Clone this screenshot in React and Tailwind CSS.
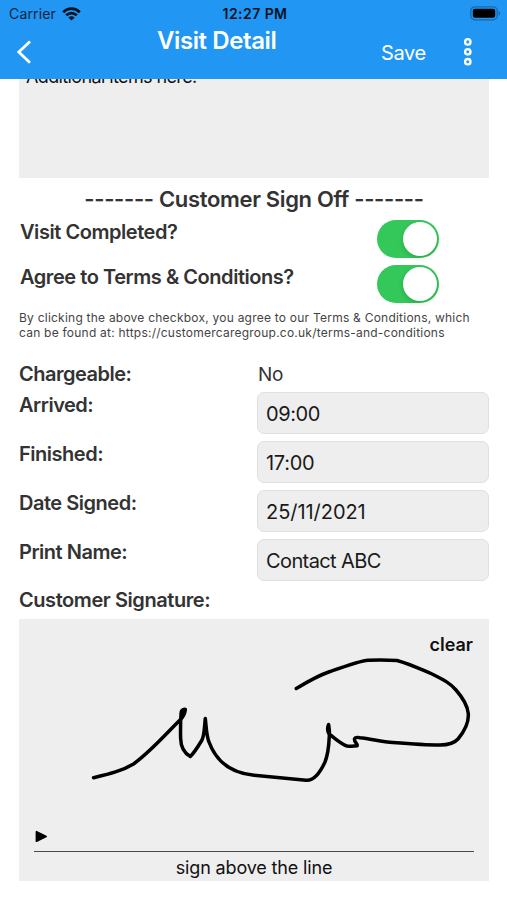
import { useState } from 'react';

const FIELDS = [
  { label: 'Arrived:', name: 'arrived', value: '09:00', tracking: 'tracking-[-0.4px]' },
  { label: 'Finished:', name: 'finished', value: '17:00', tracking: 'tracking-[-0.3px]' },
  { label: 'Date Signed:', name: 'dateSigned', value: '25/11/2021', tracking: 'tracking-[-0.05px]' },
  { label: 'Print Name:', name: 'printName', value: 'Contact ABC', tracking: 'tracking-[-0.6px]' },
];

const StatusBar = () => (
  <div className="grid h-[27px] grid-cols-3 items-center pl-[9px] pr-[6px] text-[14px] leading-none text-[#0b2440]">
    <div className="flex items-center gap-[6px]">
      <span className="tracking-[0.15px]">Carrier</span>
      <svg width="19" height="14" viewBox="0 0 19 14" fill="none" stroke="#06121f" strokeWidth="2.7">
        <path d="M1.2 5.2C6 .3 13 .3 17.8 5.2" />
        <path d="M4.2 8.3c3-3 7.6-3 10.6 0" />
        <path d="M9.5 13.6 6.4 10.5c1.7-1.6 4.5-1.6 6.2 0Z" fill="#06121f" stroke="none" />
      </svg>
    </div>
    <span className="text-center font-semibold tracking-[0.45px] text-[#06121f]">12:27 PM</span>
    <svg className="justify-self-end" width="31" height="15" viewBox="0 0 31 15">
      <rect x=".8" y=".8" width="26.4" height="13" rx="4" fill="none" stroke="#1769ad" strokeWidth="1.3" />
      <rect x="2.8" y="2.8" width="22.4" height="9" rx="2" fill="#000" />
      <path d="M28.6 5v4.6c2-.8 2-3.8 0-4.6Z" fill="#1769ad" />
    </svg>
  </div>
);

const Header = () => (
  <header className="h-[79px] bg-[#2196f3]">
    <StatusBar />
    <div className="grid grid-cols-[150px_1fr_150px] items-start text-white">
      <button type="button" aria-label="Back" className="ml-[16px] mt-[13px] w-[15px]">
        <svg width="15" height="24" viewBox="0 0 15 24" fill="none" stroke="currentColor" strokeWidth="2.8">
          <path d="M14 1.5 2.8 12 14 22.7" />
        </svg>
      </button>
      <h1 className="whitespace-nowrap pl-[7px] text-[24px] font-semibold leading-[27px] tracking-[-0.4px]">
        Visit Detail
      </h1>
      <div className="flex items-center pl-[24px] pt-[12px]">
        <button type="button" className="w-[45px] whitespace-nowrap text-left text-[20px] leading-[28px] tracking-[-0.4px]">
          Save
        </button>
        <button type="button" aria-label="More" className="ml-[37px]">
          <svg className="overflow-visible" width="10" height="28" viewBox="0 0 10 28" fill="none" stroke="currentColor" strokeWidth="2.3">
            <circle cx="4.8" cy="2.9" r="2.7" />
            <circle cx="4.8" cy="12.8" r="2.7" />
            <circle cx="4.8" cy="22.7" r="2.7" />
          </svg>
        </button>
      </div>
    </div>
  </header>
);

const Toggle = ({ label, on, onChange }) => (
  <button
    type="button"
    role="switch"
    aria-label={label}
    aria-checked={on}
    onClick={() => onChange(!on)}
    className={`flex h-[38px] w-[62px] items-center rounded-full p-[2px] ${on ? 'justify-end bg-[#34c759]' : 'bg-gray-300'}`}
  >
    <span className="size-[34px] rounded-full bg-white shadow-[0_2px_5px_rgba(0,0,0,0.15)]" />
  </button>
);

const SignaturePad = () => (
  <section className="relative flex h-[262px] flex-col bg-[#eeeeee] px-[15px] text-[#111]">
    <svg className="absolute inset-0" width="470" height="262" viewBox="19 619 470 262" fill="none">
      <path
        d="M93.5 777.7C109 774 122 771 133.5 764C150 752 163 737 180 720C183 717 185 713 185.3 709.5C184 709 181.5 710 181.2 712C180.5 720 180.4 728 180.6 738C180.8 748 184 753 190.3 756.5C194 753 199 745 202 740C204.5 735 204.5 725 205.3 718.5C206.5 729 206.5 736 209 742C216 761 230 773 254 775.2L306 780.2C313 781 319 775 325 762C329 752 329 742 329.4 734C329.5 729 328.9 727 328.6 724.5C327 728 327.4 731 329 734C336 739 341 744 347 746C351 746.5 354 746.3 357.2 745.8C357.5 743 354 742 354.5 739C355 737 358 737.3 360 737.7C371 739 382 741.5 393 742.5C409 743.8 424 745 440 745C448 745 454 743.5 458 739C474 720 470 706 456 690C450 683 444 680 432 674C420 669 410 664 397 660.5C387 659.8 379 659.8 368 660.2C361 660.5 340 668 330 671.5C317 676 307 682 296.3 688.5"
        stroke="#000"
        strokeWidth="3.5"
        strokeLinecap="round"
        strokeLinejoin="round"
      />
      <path d="M36.5 831.8v9.4l9.6-4.7Z" fill="#000" stroke="#000" strokeWidth="1.8" strokeLinejoin="round" />
    </svg>
    <button type="button" className="relative mr-px mt-[15px] self-end text-[18px] font-semibold leading-[22px]">
      clear
    </button>
    <div className="mt-auto h-[1.5px] bg-[#4a4a4a]" />
    <p className="h-[29px] pt-[4px] text-center text-[18px] leading-[24px] tracking-[-0.15px]">sign above the line</p>
  </section>
);

const App = () => {
  const [completed, setCompleted] = useState(true);
  const [agreed, setAgreed] = useState(true);

  return (
    <div className="h-[900px] w-[507px] overflow-hidden bg-white font-['Inter','Liberation_Sans',sans-serif] text-[#333]">
      <Header />
      <main className="pl-[19px] pr-[18px]">
        <div className="h-[99px] overflow-hidden bg-[#eeeeee] px-[7px] text-[18px] text-[#111]">
          <p className="-mt-[14px] leading-[24px] tracking-[-0.62px]">Additional items here:</p>
        </div>

        <h2 className="mt-[6px] whitespace-nowrap text-center text-[22px] font-semibold leading-[30px] tracking-[-0.33px]">
          ------- Customer Sign Off -------
        </h2>

        <div className="mt-[6px] grid grid-cols-[358px_62px] gap-y-[7px] text-[20px] font-semibold leading-[24px] tracking-[-0.45px]">
          <p className="pl-px">Visit Completed?</p>
          <Toggle label="Visit Completed?" on={completed} onChange={setCompleted} />
          <p className="pl-px">Agree to Terms &amp; Conditions?</p>
          <Toggle label="Agree to Terms & Conditions?" on={agreed} onChange={setAgreed} />
        </div>

        <p className="mt-[8px] whitespace-nowrap text-[12px] leading-[14.5px] tracking-[0.23px] text-[#444]">
          By clicking the above checkbox, you agree to our Terms &amp; Conditions, which
          <br />
          can be found at: https://customercaregroup.co.uk/terms-and-conditions
        </p>

        <div className="mt-[22px] grid grid-cols-[238px_232px] text-[20px] leading-[24px]">
          <p className="h-[30px] font-semibold tracking-[-0.5px]">Chargeable:</p>
          <p className="pl-px pt-px text-[19px] tracking-[-0.4px]">No</p>
        </div>

        <div className="space-y-[7px]">
          {FIELDS.map((field) => (
            <div key={field.name} className="grid grid-cols-[238px_232px] text-[20px]">
              <label htmlFor={field.name} className="font-semibold leading-[27px] tracking-[-0.48px]">
                {field.label}
              </label>
              <input
                id={field.name}
                defaultValue={field.value}
                className={`h-[42px] rounded-[7px] border border-[#e0e0e0] bg-[#eeeeee] px-[8px] pt-[2px] text-[#1a1a1a] outline-none ${field.tracking}`}
              />
            </div>
          ))}
        </div>

        <p className="mb-[7px] mt-[7px] text-[20px] font-semibold leading-[24px] tracking-[-0.43px]">Customer Signature:</p>
        <SignaturePad />
      </main>
    </div>
  );
};

export default App;
